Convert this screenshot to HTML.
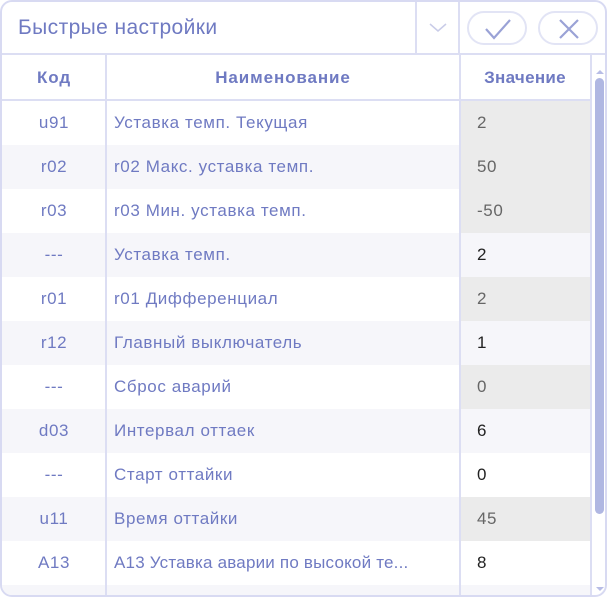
<!DOCTYPE html>
<html><head><meta charset="utf-8"><style>
*{margin:0;padding:0;box-sizing:border-box}
html,body{width:608px;height:598px;overflow:hidden}
body{background:#fff;font-family:"Liberation Sans","DejaVu Sans",sans-serif;position:relative}
.frame{position:absolute;left:0;top:0;width:607px;height:597px;border:2px solid #d8daf2;border-radius:12px;overflow:hidden;background:#fff}
.top{position:absolute;left:0;top:0;width:606px;height:53px;border-bottom:2px solid #dcdef3}
.title{position:absolute;left:16px;top:14px;font-size:21px;letter-spacing:0.4px;color:#6f7ac2}
.vl{position:absolute;top:0;width:2px;background:#dcdef3}
.btn{position:absolute;top:9px;height:34px;width:60px;border:2px solid #e2e4f5;border-radius:17px}
.hdr{position:absolute;top:53px;height:46px;left:0;width:590px;border-bottom:2px solid #dcdef3;font-weight:bold;font-size:17px;letter-spacing:0.9px;color:#6f7ac2}
.row{position:absolute;left:0;width:590px;height:44px;font-size:17px;letter-spacing:0.6px;color:#6f7ac2}
.row.alt{background:#f6f6fa}
.c1{position:absolute;left:0;width:104px;text-align:center;top:12px}
.c2{position:absolute;left:112px;top:12px;white-space:nowrap}
.c3{position:absolute;left:459px;width:129px;top:0;height:44px;padding:12px 0 0 16px;color:#222}
.c3.ro{background:#ebebeb;color:#666}
</style></head><body>
<div class="frame">
<div class="top">
<div class="title">Быстрые настройки</div>
<div class="vl" style="left:413px;height:53px"></div>
<div class="vl" style="left:456px;height:53px"></div>
<svg style="position:absolute;left:426px;top:20px" width="20" height="12"><path d="M2 2 L10 9 L18 2" stroke="#c9cce8" stroke-width="1.5" fill="none"/></svg>
<div class="btn" style="left:465px"><svg style="position:absolute;left:14px;top:4px" width="30" height="24"><path d="M3 12 L11 21 L27 3" stroke="#9aa2d6" stroke-width="2.2" fill="none"/></svg></div>
<div class="btn" style="left:536px"><svg style="position:absolute;left:17px;top:5px" width="24" height="22"><path d="M3 2 L21 20 M21 2 L3 20" stroke="#9aa2d6" stroke-width="2.2" fill="none"/></svg></div>
</div>
<div class="hdr">
<div style="position:absolute;left:0;width:104px;text-align:center;top:13px">Код</div>
<div style="position:absolute;left:104px;width:354px;text-align:center;top:13px">Наименование</div>
<div style="position:absolute;left:458px;width:130px;text-align:center;top:13px;letter-spacing:0.3px">Значение</div>
</div>
<div class="row" style="top:99px"><div class="c1">u91</div><div class="c2">Уставка темп. Текущая</div><div class="c3 ro">2</div></div>
<div class="row alt" style="top:143px"><div class="c1">r02</div><div class="c2">r02 Макс. уставка темп.</div><div class="c3 ro">50</div></div>
<div class="row" style="top:187px"><div class="c1">r03</div><div class="c2">r03 Мин. уставка темп.</div><div class="c3 ro">-50</div></div>
<div class="row alt" style="top:231px"><div class="c1">---</div><div class="c2">Уставка темп.</div><div class="c3">2</div></div>
<div class="row" style="top:275px"><div class="c1">r01</div><div class="c2">r01 Дифференциал</div><div class="c3 ro">2</div></div>
<div class="row alt" style="top:319px"><div class="c1">r12</div><div class="c2">Главный выключатель</div><div class="c3">1</div></div>
<div class="row" style="top:363px"><div class="c1">---</div><div class="c2">Сброс аварий</div><div class="c3 ro">0</div></div>
<div class="row alt" style="top:407px"><div class="c1">d03</div><div class="c2">Интервал оттаек</div><div class="c3">6</div></div>
<div class="row" style="top:451px"><div class="c1">---</div><div class="c2">Старт оттайки</div><div class="c3">0</div></div>
<div class="row alt" style="top:495px"><div class="c1">u11</div><div class="c2">Время оттайки</div><div class="c3 ro">45</div></div>
<div class="row" style="top:539px"><div class="c1">A13</div><div class="c2" style="letter-spacing:0.2px">A13 Уставка аварии по высокой те...</div><div class="c3">8</div></div>
<div class="row alt" style="top:583px;height:12px"></div>
<div class="vl" style="left:103px;top:53px;height:542px"></div>
<div class="vl" style="left:457px;top:53px;height:542px"></div>
<div class="vl" style="left:588px;top:53px;height:542px"></div>
<svg style="position:absolute;left:592px;top:66px" width="12" height="8"><path d="M2 6 L6 2 L10 6Z" fill="#b8bde6"/></svg>
<div style="position:absolute;left:593px;top:76px;width:9px;height:436px;background:#b0b7e2;border-radius:5px"></div>
<svg style="position:absolute;left:592px;top:583px" width="12" height="8"><path d="M2 2 L6 6 L10 2Z" fill="#b8bde6"/></svg>
</div>
</body></html>
